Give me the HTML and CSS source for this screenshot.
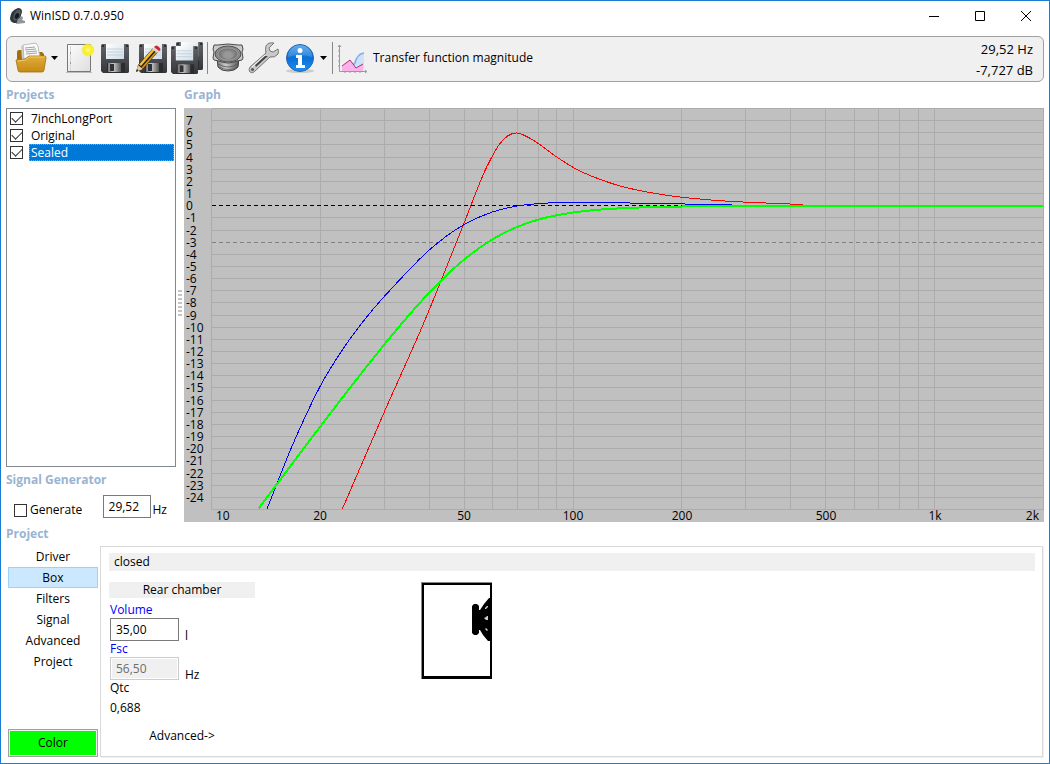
FILE: index.html
```html
<!DOCTYPE html>
<html lang="en">
<head>
    <meta charset="UTF-8">
    <meta name="viewport" content="width=device-width, initial-scale=1.0">
    <title>WinISD 0.7.0.950</title>
    <link rel="stylesheet" href="styles.css">
</head>
<body>
<svg class="defs" aria-hidden="true">
    <defs>
        <linearGradient id="gold" x1="0" y1="0" x2="0" y2="1">
            <stop offset="0" stop-color="#e2ad3c"/><stop offset="1" stop-color="#c58a12"/>
        </linearGradient>
        <linearGradient id="paper" x1="0" y1="0" x2="1" y2="1">
            <stop offset="0" stop-color="#fdfdfd"/><stop offset="1" stop-color="#dedede"/>
        </linearGradient>
        <linearGradient id="label" x1="0" y1="0" x2="1" y2="1">
            <stop offset="0" stop-color="#ffffff"/><stop offset="1" stop-color="#cfdde6"/>
        </linearGradient>
        <linearGradient id="dark" x1="0" y1="0" x2="0" y2="1">
            <stop offset="0" stop-color="#62646a"/><stop offset="1" stop-color="#35363a"/>
        </linearGradient>
        <linearGradient id="steel" x1="0" y1="0" x2="1" y2="0">
            <stop offset="0" stop-color="#777"/><stop offset="0.4" stop-color="#ccc"/><stop offset="1" stop-color="#555"/>
        </linearGradient>
        <radialGradient id="cone">
            <stop offset="0" stop-color="#aaa"/><stop offset="1" stop-color="#6f6f6f"/>
        </radialGradient>
        <linearGradient id="blue" x1="0" y1="0" x2="0" y2="1">
            <stop offset="0" stop-color="#4aa0ea"/><stop offset="0.5" stop-color="#0a6ed6"/><stop offset="1" stop-color="#1c90f4"/>
        </linearGradient>
        <radialGradient id="glow">
            <stop offset="0" stop-color="#ffffd0"/><stop offset="0.35" stop-color="#fff22e"/><stop offset="0.75" stop-color="#f5ec3c"/><stop offset="1" stop-color="#f5f03c" stop-opacity="0"/>
        </radialGradient>
    </defs>
    <symbol id="floppy" viewBox="0 0 28 29">
        <path d="M1 0h26l1 1v27l-1 1H2l-2-2V1z" fill="url(#dark)"/>
        <path d="M5 0h18v15H5z" fill="url(#label)"/>
        <path d="M6 5h16M6 8h16M6 11h16" stroke="#c3d2dd"/>
        <path d="M6 19h18v10H6z" fill="#2b2c2e"/>
        <path d="M7 19h13v9H7z" fill="url(#steel)"/>
        <path d="M9 20h4v7H9z" fill="#303134"/>
        <path d="M1 1h2v2H1zM25 1h2v2h-2z" fill="#2a2b2d"/>
    </symbol>
</svg>

<div class="window">
    <header class="titlebar">
        <svg class="app-icon" viewBox="0 0 16 16" aria-hidden="true">
            <path d="M9 0q4 0 4 4-1 6-5 11H5Q1 14 1 10 2 2 9 0z" fill="#30363b"/>
            <ellipse cx="8" cy="7" rx="3" ry="6" fill="#505a62" transform="rotate(25 8 7)"/>
            <ellipse cx="8" cy="8" rx="2" ry="3" fill="#171a1c" transform="rotate(25 8 8)"/>
            <path d="M9 11l4-3 1 2-1 2 3 1v2l-9 1z" fill="#8c969b"/>
        </svg>
        <h1>WinISD 0.7.0.950</h1>
        <div class="window-buttons">
            <button type="button" aria-label="Minimize"><svg viewBox="0 0 12 12"><path d="M1 6.500h10"/></svg></button>
            <button type="button" aria-label="Maximize"><svg viewBox="0 0 12 12"><path d="M1.500 1.500h9v9h-9z"/></svg></button>
            <button type="button" aria-label="Close"><svg viewBox="0 0 12 12"><path d="M1 1l10 10M11 1L1 11"/></svg></button>
        </div>
    </header>

    <nav class="toolbar">
        <button type="button" aria-label="Open project">
            <svg viewBox="0 0 32 32">
                <path d="M2 10q0-2 2-2h5l2 2h16l2 2v8H2z" fill="#a36d0a"/>
                <path d="M6 4l15-3 5 14-19 3z" fill="#cfcfcf"/>
                <path d="M8 3l13-2 2 3 2 13H9z" fill="#fafafa" stroke="#999" stroke-width="0.6"/>
                <path d="M10 6l10-1M10 8l11-1M11 10l11-1M11 12l11-1" stroke="#8a8a8a" stroke-width="0.8"/>
                <path d="M1 18l9-1 4-3h16q1 0 1 2l-2 12q0 2-2 2H5q-2 0-2-2z" fill="url(#gold)" stroke="#a4700e" stroke-width="0.8"/>
                <path d="M2.500 19l8-1 4-3h15" fill="none" stroke="#f0ca71"/>
            </svg>
        </button>
        <button type="button" class="drop" aria-label="Recent projects"><svg viewBox="0 0 7 4"><path d="M0 0h7L3.500 4z"/></svg></button>
        <button type="button" aria-label="New project">
            <svg viewBox="0 0 32 32">
                <path d="M3 30.500h26" stroke="#bbb"/>
                <path d="M4.500 2.500h23v27h-23z" fill="url(#paper)" stroke="#777"/>
                <path d="M7.500 4v25" stroke="#d8d8d8"/>
                <path d="M7 10h1v2H7zM7 20h1v2H7z" fill="#999"/>
                <circle cx="25" cy="8" r="7" fill="url(#glow)"/>
            </svg>
        </button>
        <button type="button" aria-label="Save project">
            <svg viewBox="0 0 32 32"><use href="#floppy" x="2" y="2" width="28" height="29"/></svg>
        </button>
        <button type="button" aria-label="Save project as">
            <svg viewBox="0 0 32 32">
                <use href="#floppy" x="4" y="2" width="28" height="29"/>
                <path d="M1 30l2-7 15-17 5 4-15 17z" fill="#1e1c18"/>
                <path d="M1 30l2-7 5 4z" fill="#e7c58f"/>
                <path d="M1 30l1-3 1.500 1.500z" fill="#222"/>
                <path d="M4 22.500l2 1.500L20 8l-2-1.500z" fill="#f6be2c"/>
                <path d="M6.500 25.500l1.500 1L22.500 10l-1.500-1z" fill="#d99112"/>
                <path d="M17 7l2-2 5 4-2 2z" fill="#d7d7d7"/>
                <path d="M19 5q2-3 5 0t0 4z" fill="#d9242e"/>
            </svg>
        </button>
        <button type="button" aria-label="Save all">
            <svg viewBox="0 0 32 32">
                <use href="#floppy" x="5" y="0" width="27" height="28"/>
                <use href="#floppy" x="0" y="4" width="27" height="28"/>
            </svg>
        </button>
        <span class="separator"></span>
        <button type="button" aria-label="Drivers">
            <svg viewBox="0 0 32 32">
                <path d="M5 16l1 9q3 4 10 4t10-4l1-9z" fill="url(#steel)" stroke="#444"/>
                <path d="M6 22q10 6 20 0M6.500 25q10 5 19 0" fill="none" stroke="#555" stroke-width="0.8"/>
                <path d="M2 3h4q10-2 20 0h4l1 4-1 3 1 6-1 2-5 1q-9 4-18 0l-5-1-1-2 1-6-1-3z" fill="#c9c9c9" stroke="#4a4a4a"/>
                <ellipse cx="16" cy="12" rx="13" ry="8" fill="#888" stroke="#555"/>
                <ellipse cx="16" cy="12" rx="10" ry="6" fill="url(#cone)" stroke="#999"/>
                <ellipse cx="16" cy="14" rx="5" ry="3" fill="#989898"/>
            </svg>
        </button>
        <button type="button" aria-label="Options">
            <svg viewBox="0 0 32 32">
                <path d="M18 11L2 25q-2 3 0 5 3 2 5-1l15-14q5 1 8-3 1-2 0-5l-5 3-3-1-1-3 5-5q-6-1-8 3-1 3 0 7z" fill="#c9c9c9" stroke="#777"/>
                <path d="M17 14L7 23l1 2 12-11z" fill="#454545"/>
                <path d="M17 13L4 25" stroke="#f8f8f8"/>
                <circle cx="4.500" cy="27.500" r="1.500" fill="#555"/>
            </svg>
        </button>
        <button type="button" aria-label="Information">
            <svg viewBox="0 0 32 32">
                <ellipse cx="16" cy="29" rx="14" ry="2" fill="#ccc"/>
                <circle cx="16" cy="16" r="13.500" fill="url(#blue)" stroke="#2466ad"/>
                <path d="M4 15a12 12 0 0 1 24 0q-12-4-24 0z" fill="#fff" opacity="0.15"/>
                <circle cx="16" cy="8.500" r="2.500" fill="#fff"/>
                <path d="M12 13h6v10h3v3h-9v-3h2v-7h-2z" fill="#fff"/>
            </svg>
        </button>
        <button type="button" class="drop" aria-label="More information"><svg viewBox="0 0 7 4"><path d="M0 0h7L3.500 4z"/></svg></button>
        <span class="separator"></span>
        <button type="button" class="plot-type">
            <svg viewBox="0 0 32 32">
                <path d="M5 24l7 1 7-8 3-5 5-2v17l-8-3-7 2-7 2z" fill="#cfe2fb"/>
                <path d="M5 25q10 1 13-4 2-9 9-10" fill="none" stroke="#80aef5" stroke-width="1.500"/>
                <path d="M5 24l8-6 6 8 7-4v7H5z" fill="#f9b2ea"/>
                <path d="M5 24l8-6 6 8 7-4" fill="none" stroke="#b0306c"/>
                <path d="M2.500 3v26.500H29M1 5l1.500-2L4 5M28 28l2 1.500-2 1.500M1 9h2M1 14h2M1 19h2M1 24h2M8 29v2M13 29v2M18 29v2M23 29v2" fill="none" stroke="#999"/>
            </svg>
            Transfer function magnitude
        </button>
        <div class="readout">
            <div>29,52 Hz</div>
            <div>-7,727 dB</div>
        </div>
    </nav>

    <main>
        <div class="workspace">
            <aside class="sidebar">
                <h2>Projects</h2>
                <ul class="project-list">
                    <li><label><input type="checkbox" checked><span>7inchLongPort</span></label></li>
                    <li><label><input type="checkbox" checked><span>Original</span></label></li>
                    <li class="selected"><label><input type="checkbox" checked><span>Sealed</span></label></li>
                </ul>
                <h2>Signal Generator</h2>
                <div class="generator">
                    <label><input type="checkbox">Generate</label>
                    <label class="frequency"><input type="text" value="29,52" aria-label="Generator frequency">Hz</label>
                </div>
            </aside>
            <div class="splitter"></div>
            <section class="graph">
                <h2>Graph</h2>
                <svg id="graph" viewBox="0 0 860 414" role="img" aria-label="Transfer function magnitude"></svg>
            </section>
        </div>

        <h2 class="project-title">Project</h2>
        <div class="project">
            <nav class="tabs">
                <button type="button">Driver</button>
                <button type="button" class="active">Box</button>
                <button type="button">Filters</button>
                <button type="button">Signal</button>
                <button type="button">Advanced</button>
                <button type="button">Project</button>
                <button type="button" class="color">Color</button>
            </nav>
            <section class="panel">
                <h3 class="box-type">closed</h3>
                <div class="box">
                    <div class="chamber">
                        <h3>Rear chamber</h3>
                        <label class="link" for="volume">Volume</label>
                        <div class="field"><input type="text" id="volume" value="35,00"><span>l</span></div>
                        <label class="link" for="fsc">Fsc</label>
                        <div class="field"><input type="text" id="fsc" value="56,50" disabled><span>Hz</span></div>
                        <div class="term">Qtc</div>
                        <div class="value">0,688</div>
                        <button type="button" class="advanced">Advanced-&gt;</button>
                    </div>
                    <svg class="enclosure" viewBox="0 0 71 97" role="img" aria-label="Closed box">
                        <path d="M0 0h71v97H0z" fill="#888"/>
                        <path d="M1 1h70v96H1z" fill="#000"/>
                        <path d="M3 3h66v91H3z" fill="#fff"/>
                        <path d="M51 24l2-2h3l2 2v4h1l4-6 5-6h1v43h-2l-5-6-3-5h-1v3l-2 2h-3l-2-2z" fill="#000"/>
                        <path d="M64 26l2-2h1v1l-2 2h-1zM63 36l2-1 1-1h1v4h-2zM64 47l1-1 2 2-1 1z" fill="#ccc"/>
                    </svg>
                </div>
            </section>
        </div>
    </main>
</div>
<script src="graph.js"></script>
</body>
</html>
```

FILE: styles.css
```css
* {
    box-sizing: border-box;
}
body {
    margin: 0;
    background-color: white;
    color: black;
    font-family: "Open Sans", "Noto Sans", sans-serif;
    font-size: 12px;
    line-height: 16px;
}
button, input {
    font: inherit;
    color: inherit;
}
button {
    border: none;
    background: none;
    padding: 0;
}
h1, h2, h3, ul {
    margin: 0;
    padding: 0;
    font-size: 12px;
    font-weight: normal;
}
h2 {
    color: #99b4d1;
    font-weight: bold;
    line-height: 26px;
}
.defs {
    position: absolute;
    width: 0;
    height: 0;
}
.window {
    border: 1px solid #1a7dcf;
    min-height: 100vh;
    padding: 0 5px 6px;
}

/* title bar */
.titlebar {
    display: flex;
    align-items: center;
    height: 35px;
    padding: 0 12px 6px 3px;
    gap: 5px;
}
.app-icon {
    width: 16px;
    height: 16px;
}
.window-buttons {
    display: flex;
    gap: 34px;
    margin-left: auto;
}
.window-buttons button, .window-buttons svg {
    display: block;
    width: 12px;
    height: 12px;
}
.window-buttons path {
    fill: none;
    stroke: black;
}

/* toolbar */
.toolbar {
    display: flex;
    align-items: flex-start;
    gap: 4px;
    padding: 5px 10px 7px 8px;
    border: 1px solid #a0a0a0;
    border-radius: 6px;
    background-color: #f0f0f0;
}
.toolbar svg {
    display: block;
    width: 32px;
    height: 32px;
}
.toolbar .drop {
    width: 8px;
    height: 32px;
}
.toolbar .drop svg {
    width: 7px;
    height: 4px;
}
.separator {
    width: 1px;
    height: 32px;
    background-color: #888;
}
.plot-type {
    display: flex;
    align-items: center;
    gap: 4px;
}
.readout {
    margin-left: auto;
    font-size: 13px;
    line-height: 21px;
    height: 32px;
    padding-top: 4px;
    display: flex;
    flex-direction: column;
    justify-content: center;
    text-align: right;
}

/* projects and graph */
.workspace {
    display: flex;
}
.sidebar {
    display: flex;
    flex-direction: column;
    width: 170px;
}
.project-list {
    flex: 1;
    list-style: none;
    border: 1px solid #828790;
    padding: 1px;
}
.project-list label {
    display: flex;
    align-items: center;
    gap: 6px;
    padding-left: 2px;
}
.project-list span {
    flex: 1;
    line-height: 17px;
    padding-left: 2px;
}
.selected span {
    background-color: #0078d7;
    color: white;
    outline: 1px dotted #ff8728;
    outline-offset: -1px;
}
input[type="checkbox"] {
    appearance: none;
    display: grid;
    place-items: center;
    width: 13px;
    height: 13px;
    margin: 0;
    border: 1px solid #333;
    background-color: white;
}
input[type="checkbox"]:checked::before {
    content: "";
    width: 9px;
    height: 5px;
    margin-bottom: 3px;
    border: solid #333;
    border-width: 0 0 1px 1px;
    transform: rotate(-45deg);
}
input[type="text"] {
    border: 1px solid #7a7a7a;
    background-color: white;
    padding: 0 5px;
    height: 23px;
}
input[type="text"]:disabled {
    border-color: #ccc;
    background-color: #f0f0f0;
    box-shadow: inset 0 0 0 1px white;
    color: #6d6d6d;
}
.generator {
    display: flex;
    justify-content: space-between;
    align-items: flex-end;
    height: 29px;
    padding: 0 9px 4px 8px;
}
.generator label {
    display: flex;
    align-items: center;
    gap: 3px;
}
.generator .frequency {
    align-items: flex-end;
    gap: 2px;
}
.frequency input {
    width: 48px;
}
.splitter {
    width: 8px;
    padding-top: 207px;
}
.splitter::before {
    content: "";
    display: block;
    width: 4px;
    height: 28px;
    margin-left: 2px;
    background: radial-gradient(circle, #c4c4c4 1px, transparent 1px) 0 0 / 2px 4px;
}
.graph {
    flex: 1;
}
.graph svg {
    display: block;
    width: 100%;
    overflow: visible;
    background-color: #c0c0c0;
}
.graph .grid {
    stroke: #acacac;
}
.graph .zero {
    stroke: black;
    stroke-dasharray: 4 3;
}
.graph .minus3 {
    stroke: #808080;
    stroke-dasharray: 4 3;
}
.graph path {
    fill: none;
    shape-rendering: crispEdges;
}
.graph text {
    font-size: 12px;
}
.middle {
    text-anchor: middle;
}
.end {
    text-anchor: end;
}

/* project */
.project-title {
    line-height: 24px;
}
.project {
    display: flex;
}
.tabs {
    display: flex;
    flex-direction: column;
    width: 94px;
    padding: 0 2px;
}
.tabs button {
    height: 21px;
    border: 1px solid transparent;
}
.tabs .active {
    background-color: #cce8ff;
    border-color: #99d1ff;
}
.tabs .color {
    height: 28px;
    margin-top: auto;
    border-color: #a0a0a0;
    background-color: lime;
    box-shadow: inset 0 0 0 1px #f0f0f0;
}
.panel {
    flex: 1;
    margin-right: 1px;
    padding: 6px 7px 12px 8px;
    border: 1px solid #d9d9d9;
    box-shadow: 1px 1px #f0f0f0;
}
.panel h3 {
    background-color: #f0f0f0;
}
.panel .box-type {
    line-height: 18px;
    padding-left: 5px;
}
.box {
    display: flex;
    align-items: flex-start;
    gap: 166px;
    margin-top: 11px;
}
.chamber {
    display: flex;
    flex-direction: column;
    width: 146px;
}
.chamber h3 {
    text-align: center;
    margin-bottom: 4px;
}
.chamber label, .term {
    padding-left: 1px;
}
.link {
    color: #0000ff;
}
.field {
    display: flex;
    align-items: flex-end;
    gap: 6px;
    height: 23px;
    padding-left: 1px;
}
.field span {
    height: 13px;
}
.field input {
    width: 69px;
}
.value {
    padding: 4px 1px 12px;
}
.advanced {
    align-self: center;
}
.enclosure {
    width: 71px;
    height: 97px;
}
```

FILE: graph.js
```javascript
const svg = document.getElementById('graph');
const left = 27.5, right = 859.5, topEdge = 0.5, bottom = 401.5;

function xOf(freq) {
    return left + Math.log10(freq / 10) / Math.log10(200) * (right - left);
}
function yOf(db) {
    return topEdge + (8 - db) / 33 * (bottom - topEdge);
}
function snap(v) {
    return Math.floor(v) + 0.5;
}
function add(name, attrs, text) {
    const el = document.createElementNS('http://www.w3.org/2000/svg', name);
    for (const key in attrs) el.setAttribute(key, attrs[key]);
    if (text !== undefined) el.textContent = text;
    svg.appendChild(el);
}

// grid
const freqs = [];
for (let f = 10; f <= 100; f += 10) freqs.push(f);
for (let f = 200; f <= 1000; f += 100) freqs.push(f);
freqs.push(2000);
for (const f of freqs) {
    add('path', { class: 'grid', d: `M${snap(xOf(f))} ${topEdge}V${bottom}` });
}
for (let db = 8; db >= -25; db--) {
    const y = snap(yOf(db));
    if (db !== 0 && db !== -3) add('path', { class: 'grid', d: `M${left} ${y}H${right}` });
    if (db < 8 && db > -25) add('text', { x: 2, y: Math.round(y + 4) }, db);
}
add('path', { class: 'zero', d: `M${left} ${snap(yOf(0))}H${right}` });
add('path', { class: 'minus3', d: `M${left} ${snap(yOf(-3))}H${right}` });

add('text', { x: 32, y: 412 }, '10');
for (const [f, label] of [[20, '20'], [50, '50'], [100, '100'], [200, '200'], [500, '500'], [1000, '1k']]) {
    add('text', { class: 'middle', x: Math.round(xOf(f)), y: 412 }, label);
}
add('text', { class: 'end', x: 855, y: 412 }, '2k');

// smooth line through the points, slopes weighted by the distance in x
function curve(pts) {
    const slope = (i) => (pts[i + 1][1] - pts[i][1]) / (pts[i + 1][0] - pts[i][0]);
    const m = pts.map((p, i) => {
        if (i === 0) return slope(0);
        if (i === pts.length - 1) return slope(i - 1);
        const before = p[0] - pts[i - 1][0], after = pts[i + 1][0] - p[0];
        return (after * slope(i - 1) + before * slope(i)) / (before + after);
    });
    let d = `M${pts[0]}`;
    for (let i = 0; i < pts.length - 1; i++) {
        const [x0, y0] = pts[i], [x1, y1] = pts[i + 1];
        const h = (x1 - x0) / 3;
        d += `C${x0 + h} ${y0 + h * m[i]} ${x1 - h} ${y1 - h * m[i + 1]} ${x1} ${y1}`;
    }
    return d;
}

const longPort = [[158.3, 401], [200.3, 304], [241, 212], [279.3, 117], [302.7, 59],
    [316, 35.5], [324, 27.7], [332.5, 25], [344.5, 29.5], [372.7, 49], [389.3, 59.5],
    [431, 76.5], [477.7, 86.5], [536, 92.7], [582, 95], [619, 96.5]];
const original = [[83, 401], [107.7, 339], [122, 307], [136.3, 278], [158.3, 242],
    [184.3, 207], [212.7, 175], [245.3, 142], [279.3, 117], [308.3, 104],
    [333.3, 98], [361, 95.2], [389, 94.500], [431, 94.7], [478, 95.7], [548, 96.6]];

// closed box: second order high pass with Fsc and Qtc
const sealed = [];
for (let f = 13.500; f <= 2000; f *= 1.03) {
    const x = (f / 56.5) ** 2;
    const db = 20 * Math.log10(x / Math.sqrt((1 - x) ** 2 + x / 0.688 ** 2));
    sealed.push([xOf(f), Math.min(yOf(db), bottom)]);
}
sealed.push([right, yOf(0)]);

add('path', { d: curve(longPort), stroke: '#ff0000' });
add('path', { d: curve(original), stroke: '#0000ff' });
add('path', { d: curve(sealed), stroke: '#00ff00', 'stroke-width': 2 });
```
